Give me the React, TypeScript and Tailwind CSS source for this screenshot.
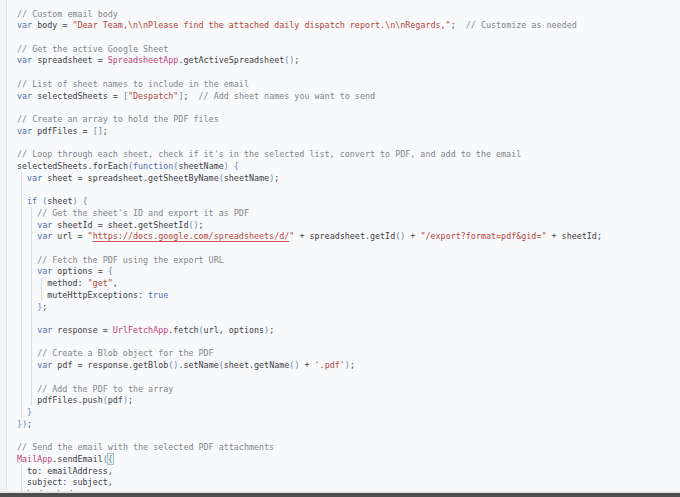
import React from "react";

type Line = { text: string; guides: number };

const L = (text: string, guides = 0): Line => ({ text, guides });

const lines: Line[] = [
  L("// Custom email body"),
  L('var body = "Dear Team,\\n\\nPlease find the attached daily dispatch report.\\n\\nRegards,";  // Customize as needed'),
  L(""),
  L("// Get the active Google Sheet"),
  L("var spreadsheet = SpreadsheetApp.getActiveSpreadsheet();"),
  L(""),
  L("// List of sheet names to include in the email"),
  L('var selectedSheets = ["Despatch"];  // Add sheet names you want to send'),
  L(""),
  L("// Create an array to hold the PDF files"),
  L("var pdfFiles = [];"),
  L(""),
  L("// Loop through each sheet, check if it's in the selected list, convert to PDF, and add to the email"),
  L("selectedSheets.forEach(function(sheetName) {"),
  L("  var sheet = spreadsheet.getSheetByName(sheetName);", 1),
  L("", 1),
  L("  if (sheet) {", 1),
  L("    // Get the sheet's ID and export it as PDF", 2),
  L("    var sheetId = sheet.getSheetId();", 2),
  L('    var url = "https://docs.google.com/spreadsheets/d/" + spreadsheet.getId() + "/export?format=pdf&gid=" + sheetId;', 2),
  L("", 2),
  L("    // Fetch the PDF using the export URL", 2),
  L("    var options = {", 2),
  L('      method: "get",', 3),
  L("      muteHttpExceptions: true", 3),
  L("    };", 2),
  L("", 2),
  L("    var response = UrlFetchApp.fetch(url, options);", 2),
  L("", 2),
  L("    // Create a Blob object for the PDF", 2),
  L("    var pdf = response.getBlob().setName(sheet.getName() + '.pdf');", 2),
  L("", 2),
  L("    // Add the PDF to the array", 2),
  L("    pdfFiles.push(pdf);", 2),
  L("  }", 1),
  L("});"),
  L(""),
  L("// Send the email with the selected PDF attachments"),
  L("MailApp.sendEmail({"),
  L("  to: emailAddress,", 1),
  L("  subject: subject,", 1),
  L("  body: body", 1),
];

const tokenRe =
  /(\/\/.*$)|("[^"]*"|'[^']*')|(\b(?:var|function|if|true)\b)|(\b(?:SpreadsheetApp|UrlFetchApp|MailApp)\b)|([()[\]{}])/g;

function renderCode(text: string, lineIdx: number) {
  const out: React.ReactNode[] = [];
  let last = 0;
  let m: RegExpExecArray | null;
  let k = 0;
  tokenRe.lastIndex = 0;
  while ((m = tokenRe.exec(text)) !== null) {
    if (m.index > last) {
      out.push(
        <span key={k++} className="text-[#3c4043]">
          {text.slice(last, m.index)}
        </span>
      );
    }
    const t = m[0];
    if (m[1]) {
      out.push(
        <span key={k++} className="text-[#80868b]">
          {t}
        </span>
      );
    } else if (m[2]) {
      if (t.startsWith('"https://')) {
        out.push(
          <span key={k++} className="text-[#b3453d]">
            "
            <span className="underline decoration-[#d0574f] underline-offset-[2px]">
              {t.slice(1, -1)}
            </span>
            "
          </span>
        );
      } else {
        out.push(
          <span key={k++} className="text-[#b3453d]">
            {t}
          </span>
        );
      }
    } else if (m[3]) {
      out.push(
        <span key={k++} className="text-[#4d6fae]">
          {t}
        </span>
      );
    } else if (m[4]) {
      out.push(
        <span key={k++} className="text-[#c2437a]">
          {t}
        </span>
      );
    } else if (m[5]) {
      const isMatch = lineIdx === 38 && t === "{";
      out.push(
        <span
          key={k++}
          className={
            isMatch
              ? "text-[#4f8fa8] outline outline-1 outline-[#9fc3c0] bg-[#eef5f3]"
              : "text-[#5f88b8]"
          }
        >
          {t}
        </span>
      );
    }
    last = m.index + t.length;
  }
  if (last < text.length) {
    out.push(
      <span key={k++} className="text-[#3c4043]">
        {text.slice(last)}
      </span>
    );
  }
  return out;
}

function CodeLine({ line, idx }: { line: Line; idx: number }) {
  const guides = Array.from({ length: line.guides });
  const rest = line.text.slice(line.guides * 2);
  return (
    <div className="flex h-[11.72px] items-center whitespace-pre">
      {guides.map((_, i) => (
        <span key={i} className="flex h-full w-[2ch] shrink-0 pl-[4px]">
          <span className="block h-full border-l border-[#dcdee1]" />
        </span>
      ))}
      <span>{renderCode(rest, idx)}</span>
    </div>
  );
}

export default function App() {
  return (
    <div className="relative flex h-[497px] w-[680px] overflow-hidden bg-[#f8f9fa]">
      <div className="w-[7px] shrink-0 border-r border-[#e3e5e8] bg-[#f3f4f6]" />
      <div
        className="flex-1 pl-[10px] pt-[8px] text-[8.4px]"
        style={{ fontFamily: '"DejaVu Sans Mono", "Liberation Mono", monospace' }}
      >
        {lines.map((l, i) => (
          <CodeLine key={i} line={l} idx={i} />
        ))}
      </div>
      <div className="absolute bottom-0 left-0 right-0 flex flex-col">
        <div className="h-[2px] bg-[#e6e7e9]" />
        <div className="h-[4px] bg-[#4f4f4f]" />
      </div>
    </div>
  );
}
